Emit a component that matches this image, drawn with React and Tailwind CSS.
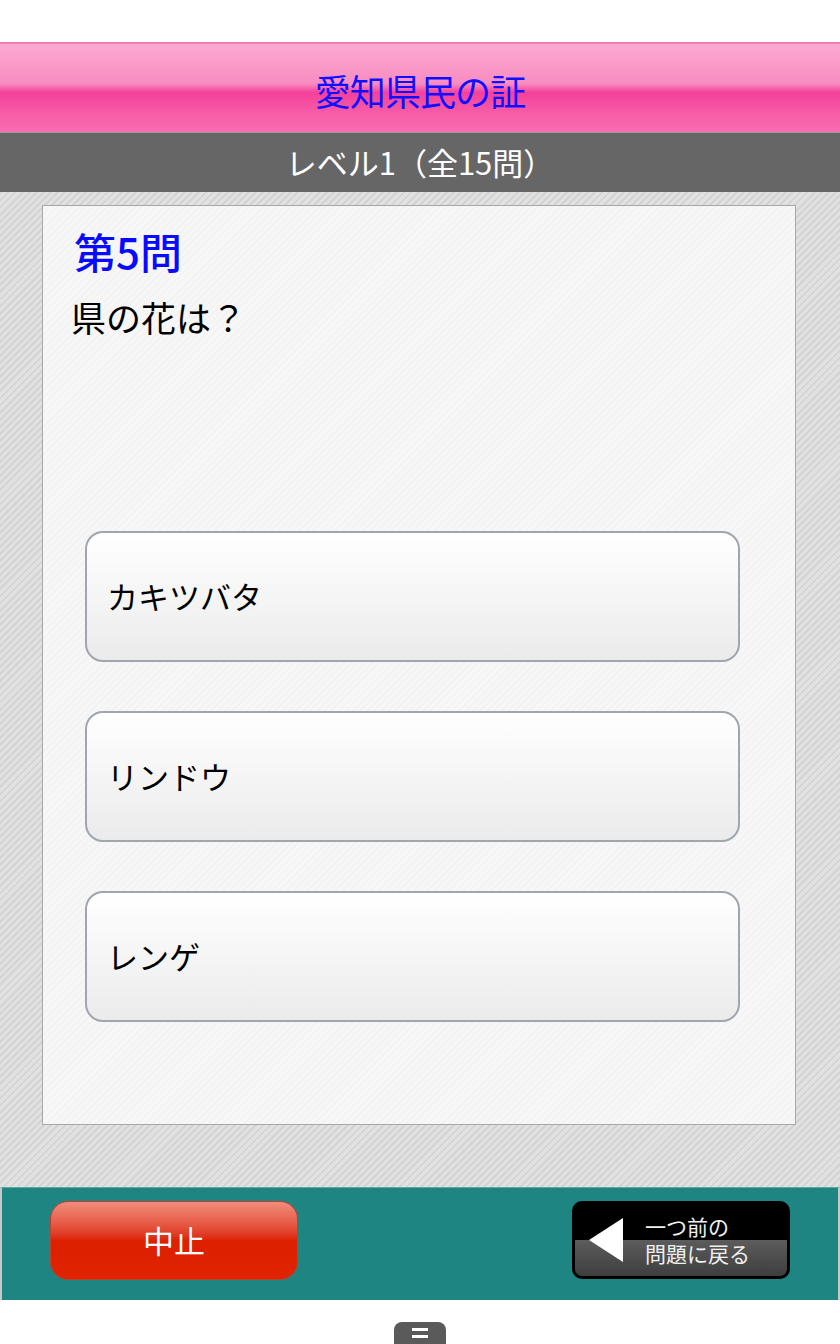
import React from 'react';

const jp = { fontFamily: '"Noto Sans CJK JP", "Noto Sans", sans-serif' };

const stripes =
  'bg-[repeating-linear-gradient(135deg,#d3d3d3_0px,#d3d3d3_2px,#e1e1e1_2px,#e1e1e1_5px)]';

const AnswerButton = ({ label }) => (
  <button className="flex h-[131px] w-[655px] items-center rounded-[18px] border-2 border-[#a0a6ae] bg-gradient-to-b from-white to-[#ebebeb] pl-[20px] text-left text-[31px] text-black">
    {label}
  </button>
);

const App = () => {
  return (
    <div className="flex h-[1344px] w-[840px] flex-col bg-white" style={jp}>
      <div className="h-[42px]" />

      <header className="flex h-[90px] items-center justify-center border-t-2 border-[#f27eb4] bg-[linear-gradient(180deg,#fcaad2_0%,#f88cc0_45%,#f5409a_55%,#f75ea8_80%,#f86cb2_100%)]">
        <h1 className="pt-1 text-[36px] tracking-tight text-[#1010ff]">愛知県民の証</h1>
      </header>

      <div className="flex h-[60px] items-center justify-center border-t border-[#9a9a9a] bg-[#666666]">
        <span className="text-[31px] text-white">レベル1（全15問）</span>
      </div>

      <main className={`flex h-[995px] flex-col pl-[42px] pt-[13px] ${stripes}`}>
        <div className="flex h-[920px] w-[754px] flex-col border border-[#a8a8a8] bg-[repeating-linear-gradient(135deg,#f3f3f3_0px,#f3f3f3_2px,#f7f7f7_2px,#f7f7f7_5px)]">
          <div className="ml-[31px] mt-[20px] text-[42px] font-medium leading-[50px] text-[#0a0aff]">第5問</div>
          <div className="ml-[28px] mt-[18px] text-[35px] leading-[46px] text-black">県の花は？</div>

          <div className="ml-[42px] mt-[191px] flex flex-col gap-[49px]">
            <AnswerButton label="カキツバタ" />
            <AnswerButton label="リンドウ" />
            <AnswerButton label="レンゲ" />
          </div>
        </div>
      </main>

      <footer className="flex h-[113px] items-start justify-between border-x-2 border-t border-[#c8c8c8] border-t-[#5aa8a5] bg-[#1e8582] pl-[48px] pr-[48px] pt-[13px]">
        <button className="flex h-[79px] w-[248px] items-center justify-center rounded-[18px] border border-[#c0402a] bg-gradient-to-b from-[#f08c7c] via-[#dc2000] to-[#e02400] text-[31px] text-white">
          中止
        </button>

        <button className="relative flex h-[78px] w-[218px] flex-col overflow-hidden rounded-[10px] border-[3px] border-black bg-black">
          <div className="h-[36px] bg-black" />
          <div className="flex-1 bg-gradient-to-b from-[#5c5c5c] to-[#3e3e3e]" />
          <div className="absolute inset-0 flex items-center pl-[14px]">
            <svg width="36" height="44" viewBox="0 0 36 44">
              <polygon points="0,22 34,0 34,44" fill="white" />
            </svg>
            <div className="ml-[20px] flex flex-col items-start text-[21px] leading-[27px] text-[#f0f0f0]">
              <span>一つ前の</span>
              <span>問題に戻る</span>
            </div>
          </div>
        </button>
      </footer>

      <div className="flex flex-1 items-end justify-center">
        <div className="flex h-[22px] w-[52px] flex-col items-center gap-[4px] rounded-t-[8px] bg-[#5a5a5a] pt-[6px]">
          <div className="h-[3px] w-[16px] bg-white" />
          <div className="h-[3px] w-[16px] bg-white" />
        </div>
      </div>
    </div>
  );
};

export default App;
